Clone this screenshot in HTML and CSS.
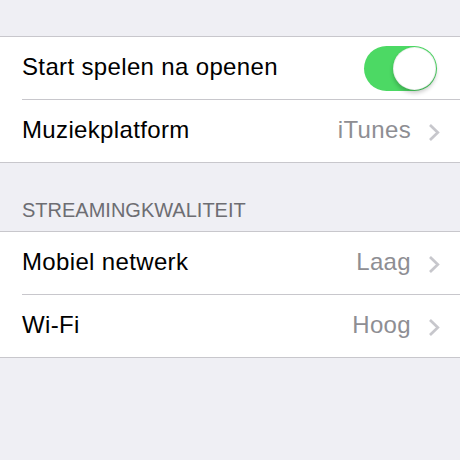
FILE: index.html
```html
<!DOCTYPE html>
<html lang="nl">
<head>
<meta charset="utf-8">
<title>Instellingen</title>
<link rel="stylesheet" href="styles.css">
</head>
<body>
<div class="top-space"></div>
<section class="group">
  <div class="row">
    <div class="row-inner">
      <span class="label">Start spelen na openen</span>
      <span class="switch"><span class="knob"></span></span>
    </div>
  </div>
  <div class="row">
    <div class="row-inner">
      <span class="label">Muziekplatform</span>
      <span class="value">iTunes</span>
      <svg class="chevron" width="12" height="19" viewBox="0 0 12 19"><polyline points="2,2 9.8,9.5 2,17" fill="none" stroke="#c7c7cc" stroke-width="2.7"/></svg>
    </div>
  </div>
</section>
<div class="section-header">STREAMINGKWALITEIT</div>
<section class="group">
  <div class="row">
    <div class="row-inner">
      <span class="label">Mobiel netwerk</span>
      <span class="value">Laag</span>
      <svg class="chevron" width="12" height="19" viewBox="0 0 12 19"><polyline points="2,2 9.8,9.5 2,17" fill="none" stroke="#c7c7cc" stroke-width="2.7"/></svg>
    </div>
  </div>
  <div class="row">
    <div class="row-inner">
      <span class="label">Wi-Fi</span>
      <span class="value">Hoog</span>
      <svg class="chevron" width="12" height="19" viewBox="0 0 12 19"><polyline points="2,2 9.8,9.5 2,17" fill="none" stroke="#c7c7cc" stroke-width="2.7"/></svg>
    </div>
  </div>
</section>
</body>
</html>
```
FILE: styles.css
```css
html, body {
  margin: 0;
  padding: 0;
  background: #efeff4;
  font-family: "Liberation Sans", Arial, sans-serif;
  height: 100%;
}
.top-space {
  height: 36px;
}
.group {
  background: #ffffff;
  border-top: 1px solid #c8c7cc;
  border-bottom: 1px solid #c8c7cc;
}
.row {
  padding-left: 22px;
}
.row-inner {
  display: flex;
  align-items: center;
  height: 62px;
  border-bottom: 1px solid #c8c7cc;
  padding-right: 20px;
}
.row:last-child .row-inner {
  border-bottom: none;
}
.label {
  flex: 1;
  font-size: 24px;
  line-height: 24px;
  letter-spacing: 0.35px;
  color: #000;
  padding-bottom: 2px;
}
.value {
  font-size: 24px;
  line-height: 24px;
  letter-spacing: 0.35px;
  color: #8e8e93;
  margin-right: 17px;
  padding-bottom: 2px;
}
.chevron {
  display: block;
  margin-top: 2px;
}
.switch {
  position: relative;
  width: 73px;
  height: 45px;
  border-radius: 23px;
  background: #4cd964;
  margin-right: 3px;
}
.knob {
  position: absolute;
  right: 1px;
  top: 1px;
  width: 41px;
  height: 41px;
  border-radius: 50%;
  background: #fff;
  border: 1px solid rgba(0, 0, 0, 0.06);
  box-shadow: 0 3px 4px rgba(0, 0, 0, 0.22);
}
.section-header {
  padding: 37px 0 11px 22px;
  font-size: 20px;
  line-height: 20px;
  color: #6d6d72;
}
```
